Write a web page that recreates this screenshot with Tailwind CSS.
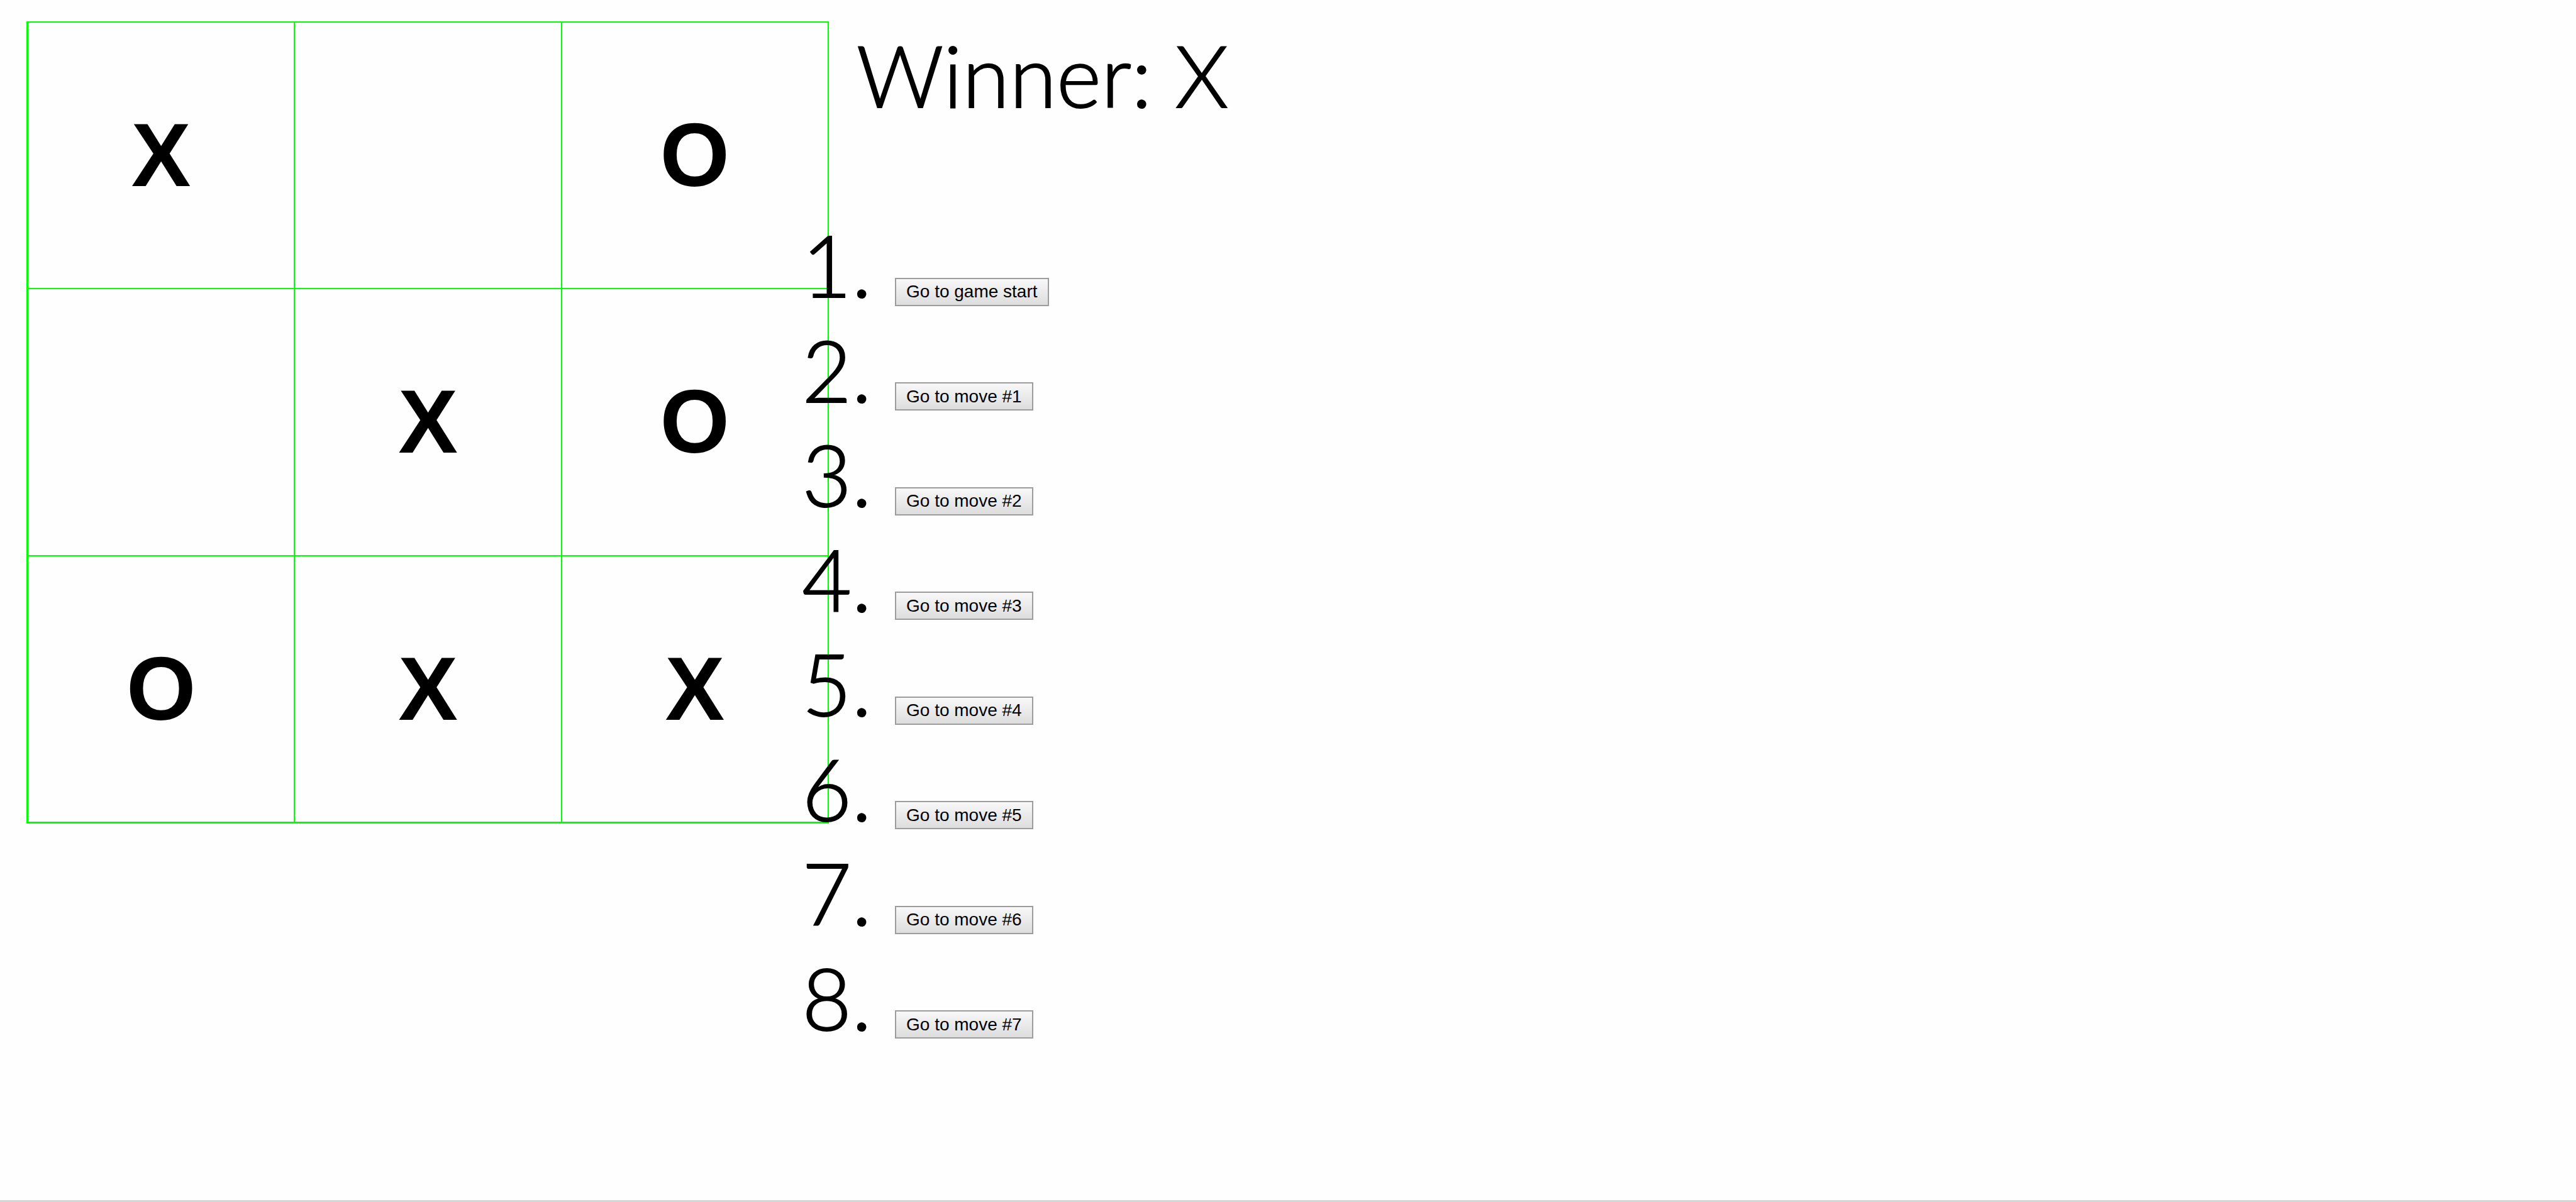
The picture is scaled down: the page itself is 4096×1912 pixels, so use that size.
<!DOCTYPE html>
<html lang="en">
<head>
<meta charset="utf-8">
<title>Tic Tac Toe</title>
<script src="https://cdn.jsdelivr.net/npm/@tailwindcss/browser@4"></script>
</head>
<body class="bg-[#fefefe] text-black">
<div class="flex min-h-screen flex-col border-b-3 border-[#d6d6d6]">
  <main class="flex items-start pl-[42px] pt-[34px]">
    <section aria-label="Board" class="grid aspect-square w-[1276px] shrink-0 grid-cols-3 grid-rows-3 gap-0.5 border-2 border-b-3 border-l-3 border-[#00ff00] bg-[#00ff00] font-['Liberation_Sans',Arial,sans-serif] text-[142px] leading-[144px] font-bold *:bg-[#fefefe]">
      <button type="button">X</button>
      <button type="button" aria-label="Empty square"></button>
      <button type="button">O</button>
      <button type="button" aria-label="Empty square"></button>
      <button type="button">X</button>
      <button type="button">O</button>
      <button type="button">O</button>
      <button type="button">X</button>
      <button type="button">X</button>
    </section>
    <section aria-label="Game info" class="relative min-w-0 grow pt-0.5 pl-11 font-['Century_Gothic',Lato,sans-serif] text-[136px] leading-[166px] font-light [-webkit-text-stroke:2px_black]">
      <div>Winner: X</div>
      <ol class="mt-[136px] -ml-[132px] grid h-[1332px] grid-rows-8">
        <li class="flex items-baseline"><span class="w-[156px] text-right">1.</span><button type="button" class="ml-[37px] h-[45px] border-2 border-[#9c9c9c] bg-linear-to-b from-[#f8f8f8] to-[#dddddd] px-4 font-['Liberation_Sans',Arial,sans-serif] text-[28px] leading-8 font-normal [-webkit-text-stroke:0]">Go to game start</button></li>
        <li class="flex items-baseline"><span class="w-[156px] text-right">2.</span><button type="button" class="ml-[37px] h-[45px] border-2 border-[#9c9c9c] bg-linear-to-b from-[#f8f8f8] to-[#dddddd] px-4 font-['Liberation_Sans',Arial,sans-serif] text-[28px] leading-8 font-normal [-webkit-text-stroke:0]">Go to move #1</button></li>
        <li class="flex items-baseline"><span class="w-[156px] text-right">3.</span><button type="button" class="ml-[37px] h-[45px] border-2 border-[#9c9c9c] bg-linear-to-b from-[#f8f8f8] to-[#dddddd] px-4 font-['Liberation_Sans',Arial,sans-serif] text-[28px] leading-8 font-normal [-webkit-text-stroke:0]">Go to move #2</button></li>
        <li class="flex items-baseline"><span class="w-[156px] text-right">4.</span><button type="button" class="ml-[37px] h-[45px] border-2 border-[#9c9c9c] bg-linear-to-b from-[#f8f8f8] to-[#dddddd] px-4 font-['Liberation_Sans',Arial,sans-serif] text-[28px] leading-8 font-normal [-webkit-text-stroke:0]">Go to move #3</button></li>
        <li class="flex items-baseline"><span class="w-[156px] text-right">5.</span><button type="button" class="ml-[37px] h-[45px] border-2 border-[#9c9c9c] bg-linear-to-b from-[#f8f8f8] to-[#dddddd] px-4 font-['Liberation_Sans',Arial,sans-serif] text-[28px] leading-8 font-normal [-webkit-text-stroke:0]">Go to move #4</button></li>
        <li class="flex items-baseline"><span class="w-[156px] text-right">6.</span><button type="button" class="ml-[37px] h-[45px] border-2 border-[#9c9c9c] bg-linear-to-b from-[#f8f8f8] to-[#dddddd] px-4 font-['Liberation_Sans',Arial,sans-serif] text-[28px] leading-8 font-normal [-webkit-text-stroke:0]">Go to move #5</button></li>
        <li class="flex items-baseline"><span class="w-[156px] text-right">7.</span><button type="button" class="ml-[37px] h-[45px] border-2 border-[#9c9c9c] bg-linear-to-b from-[#f8f8f8] to-[#dddddd] px-4 font-['Liberation_Sans',Arial,sans-serif] text-[28px] leading-8 font-normal [-webkit-text-stroke:0]">Go to move #6</button></li>
        <li class="flex items-baseline"><span class="w-[156px] text-right">8.</span><button type="button" class="ml-[37px] h-[45px] border-2 border-[#9c9c9c] bg-linear-to-b from-[#f8f8f8] to-[#dddddd] px-4 font-['Liberation_Sans',Arial,sans-serif] text-[28px] leading-8 font-normal [-webkit-text-stroke:0]">Go to move #7</button></li>
      </ol>
    </section>
  </main>
</div>
</body>
</html>
